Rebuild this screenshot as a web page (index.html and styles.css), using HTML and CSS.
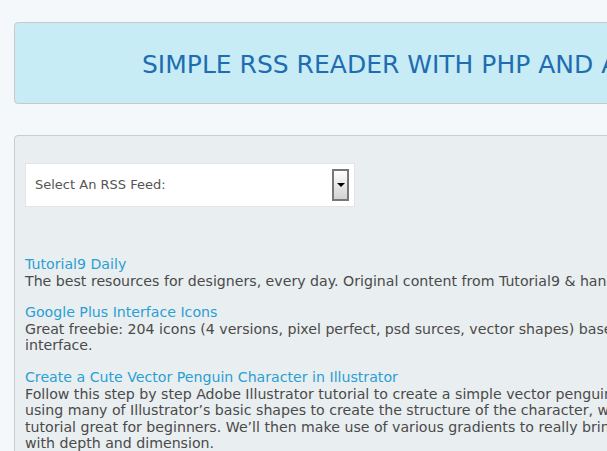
FILE: index.html
```html
<!DOCTYPE html>
<html>
<head>
<meta charset="utf-8">
<link rel="stylesheet" href="styles.css">
</head>
<body>
<div class="wrap">
  <header class="header">
    <h1 class="title">SIMPLE RSS READER WITH PHP AND AJAX</h1>
  </header>
  <main class="panel">
    <div class="select">
      <span class="select-label">Select An RSS Feed:</span>
      <span class="select-btn"><span class="arrow"></span></span>
    </div>
    <div class="feed">
      <div class="item">
        <a class="item-title" href="#">Tutorial9 Daily</a>
        <p class="item-desc">The best resources for designers, every day. Original content from Tutorial9 &amp; hand-picked links from around the web.</p>
      </div>
      <div class="item">
        <a class="item-title" href="#">Google Plus Interface Icons</a>
        <p class="item-desc">Great freebie: 204 icons (4 versions, pixel perfect, psd surces, vector shapes) based on the new Google Plus<br>interface.</p>
      </div>
      <div class="item">
        <a class="item-title" href="#">Create a Cute Vector Penguin Character in Illustrator</a>
        <p class="item-desc">Follow this step by step Adobe Illustrator tutorial to create a simple vector penguin character. We’ll be<br>using many of Illustrator’s basic shapes to create the structure of the character, which makes this<br>tutorial great for beginners. We’ll then make use of various gradients to really bring the character to life<br>with depth and dimension.</p>
      </div>
    </div>
  </main>
</div>
</body>
</html>
```
FILE: styles.css
```css
html, body {
  margin: 0;
  padding: 0;
}
body {
  background: #f4f8fa;
  font-family: "DejaVu Sans", Verdana, sans-serif;
  font-size: 14.15px;
  line-height: 16.6px;
  color: #4a4a4a;
  overflow: hidden;
}
.wrap {
  width: 880px;
  padding: 22px 0 0 14px;
}
.header {
  background: #c7ecf6;
  border: 1px solid #c9c9c9;
  border-radius: 4px;
  display: flex;
  align-items: center;
  padding: 3px 0 0 127px;
  box-sizing: border-box;
  height: 82px;
}
.title {
  margin: 0;
  font-weight: normal;
  font-size: 25px;
  line-height: 30px;
  color: #1f6db0;
  white-space: nowrap;
}
.panel {
  margin-top: 31px;
  background: #e9eef0;
  border: 1px solid #cccccc;
  border-radius: 4px;
  padding: 27px 10px 20px;
}
.select {
  width: 330px;
  height: 44px;
  box-sizing: border-box;
  background: #ffffff;
  border: 1px solid #e1e5e7;
  display: flex;
  align-items: center;
  justify-content: space-between;
  padding: 0 5px 0 9px;
}
.select-label {
  color: #555555;
  font-size: 13px;
}
.select-btn {
  width: 17px;
  height: 32px;
  box-sizing: border-box;
  border: 2px solid #777777;
  background: linear-gradient(#ffffff, #d2d2d2);
  display: flex;
  align-items: center;
  justify-content: center;
}
.arrow {
  width: 0;
  height: 0;
  border-left: 4px solid transparent;
  border-right: 4px solid transparent;
  border-top: 4px solid #000000;
}
.feed {
  margin-top: 49px;
}
.item {
  margin-bottom: 15px;
}
.item-title {
  display: block;
  color: #2a9fd4;
  text-decoration: none;
}
.item-desc {
  margin: 0;
}
```
